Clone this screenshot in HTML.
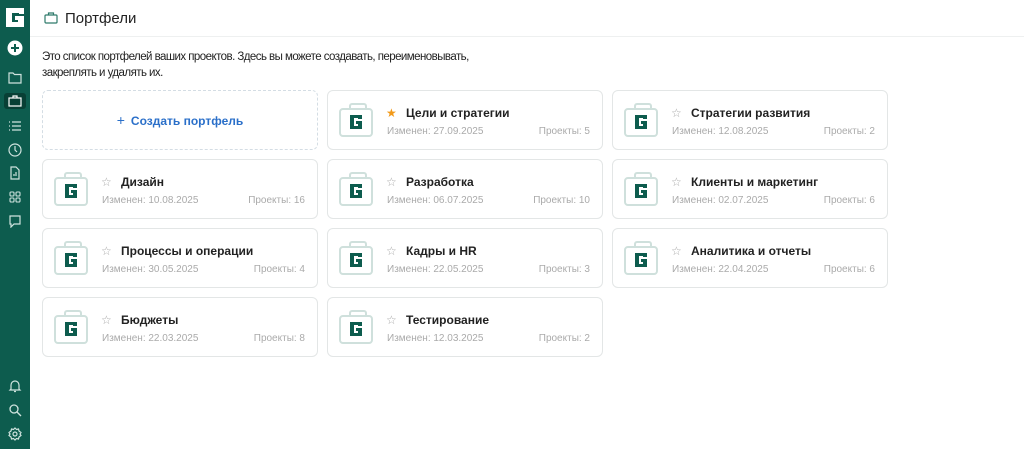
<!DOCTYPE html><html><head><meta charset="utf-8"><style>
*{box-sizing:border-box;margin:0;padding:0}
body{width:1024px;height:449px;overflow:hidden;background:#fff;font-family:"Liberation Sans",sans-serif;position:relative}
.sb{position:absolute;left:0;top:0;width:30px;height:449px;background:#0d5c4e}
.sb svg{position:absolute;left:8px}
.hdr{position:absolute;left:30px;top:0;right:0;height:37px;border-bottom:1px solid #eef0f0}
.hdr span{position:absolute;left:35px;top:10px;font-size:15px;color:#222}
.desc{position:absolute;left:42px;top:49px;font-size:11.5px;letter-spacing:-0.55px;line-height:16px;color:#222;white-space:nowrap}
.card{position:absolute;width:276px;height:60px;border:1px solid #e3e6e6;border-radius:6px;background:#fff}
.card svg.bi{position:absolute;left:11px;top:12px}
.card .st{position:absolute;left:58px;top:15px;font-size:12px;color:#aaa}
.card .t{position:absolute;left:78px;top:15px;font-size:12px;font-weight:bold;color:#222}
.card .d{position:absolute;left:59px;top:35px;font-size:10px;color:#aaa}
.card .p{position:absolute;right:12px;top:35px;font-size:10px;color:#aaa}
.new{position:absolute;left:42px;top:90px;width:276px;height:60px;border:1px dashed #d4dde4;border-radius:6px;color:#2a6fc9;font-size:12px;font-weight:bold;text-align:center;line-height:58px}
</style></head><body>
<div class="sb">
<svg style="left:6px;top:8px" width="18" height="19" viewBox="0 0 18 19"><path d="M0 0h18v6h-5V5H6v9h6v-2H9V8h9v11H0z" fill="#fff"/></svg>
<svg style="left:7px;top:40px" width="16" height="16" viewBox="0 0 16 16"><circle cx="8" cy="8" r="7.5" fill="#fff"/><path d="M8 4v8M4 8h8" stroke="#0d5c4e" stroke-width="2"/></svg>
<svg style="top:72px" width="14" height="12" viewBox="0 0 14 12" fill="none" stroke="#cfe3de" stroke-width="1.2"><path d="M1 1h4l1.5 1.5H13v8.5H1z"/></svg>
<div style="position:absolute;left:4px;top:93px;width:22px;height:16px;background:#083f35;border-radius:3px"></div>
<svg style="top:95px" width="14" height="12" viewBox="0 0 14 12" fill="none" stroke="#fff" stroke-width="1.2"><rect x="1" y="3" width="12" height="8"/><path d="M5 3V1h4v2"/></svg>
<svg style="top:120px" width="14" height="12" viewBox="0 0 14 12" stroke="#cfe3de" stroke-width="1.2"><path d="M1 2h1M4 2h9M1 6h1M4 6h9M1 10h1M4 10h9"/></svg>
<svg style="top:143px" width="14" height="14" viewBox="0 0 14 14" fill="none" stroke="#cfe3de" stroke-width="1.2"><circle cx="7" cy="7" r="6"/><path d="M7 3v4l2 2"/></svg>
<svg style="top:166px" width="14" height="14" viewBox="0 0 14 14" fill="none" stroke="#cfe3de" stroke-width="1.2"><path d="M3 1h5l3 3v9H3z M6 10V8M8 10V6"/></svg>
<svg style="top:191px" width="14" height="12" viewBox="0 0 14 12" fill="none" stroke="#cfe3de" stroke-width="1.1"><rect x="2" y="1" width="4" height="4" rx="1"/><rect x="8" y="1" width="4" height="4" rx="1"/><rect x="2" y="7" width="4" height="4" rx="1"/><rect x="8" y="7" width="4" height="4" rx="1"/></svg>
<svg style="top:215px" width="14" height="13" viewBox="0 0 14 13" fill="none" stroke="#cfe3de" stroke-width="1.2"><path d="M2 1h10v8H6l-3 3V9H2z"/></svg>
<svg style="top:379px" width="14" height="14" viewBox="0 0 14 14" fill="none" stroke="#cfe3de" stroke-width="1.2"><path d="M3 10V6a4 4 0 018 0v4l1 1H2z M6 12.5h2"/></svg>
<svg style="top:403px" width="14" height="14" viewBox="0 0 14 14" fill="none" stroke="#cfe3de" stroke-width="1.3"><circle cx="6" cy="6" r="4"/><path d="M9 9l4 4"/></svg>
<svg style="top:427px" width="14" height="14" viewBox="0 0 14 14" fill="none" stroke="#cfe3de" stroke-width="1.2"><circle cx="7" cy="7" r="2"/><path d="M7 1l1.5 1.5 2-.5.5 2L13 5.5 12 7l1 1.5-2 1.5-.5 2-2-.5L7 13l-1.5-1.5-2 .5-.5-2L1 8.5 2 7 1 5.5l2-1.5.5-2 2 .5z"/></svg>
</div>
<div class="hdr"><svg style="position:absolute;left:14px;top:12px" width="14" height="12" viewBox="0 0 14 12" fill="none" stroke="#2f7a6b" stroke-width="1.2"><rect x="1" y="3" width="12" height="8" rx="1"/><path d="M4.5 3V1h5v2"/></svg><span>Портфели</span></div>
<div class="desc">Это список портфелей ваших проектов. Здесь вы можете создавать, переименовывать,<br>закреплять и удалять их.</div>
<div class="new"><span style="font-weight:normal;font-size:14px;margin-right:6px">+</span>Создать портфель</div>
<svg width="0" height="0" style="position:absolute"><defs><g id="bc"><rect x="11" y="1" width="16" height="8" rx="2" fill="none" stroke="#cfe0dc" stroke-width="2"/><rect x="1" y="6" width="32" height="27" rx="3" fill="#fff" stroke="#cfe0dc" stroke-width="2"/><path d="M11 12h12v4h-4v-1h-4v8h4v-2h-2v-3h6v8H11z" fill="#0d5c4e"/></g></defs></svg>
<div id="cards"></div>
<script>
var d=[[1,0,"Цели и стратегии","27.09.2025",5,1],[2,0,"Стратегии развития","12.08.2025",2],[0,1,"Дизайн","10.08.2025",16],[1,1,"Разработка","06.07.2025",10],[2,1,"Клиенты и маркетинг","02.07.2025",6],[0,2,"Процессы и операции","30.05.2025",4],[1,2,"Кадры и HR","22.05.2025",3],[2,2,"Аналитика и отчеты","22.04.2025",6],[0,3,"Бюджеты","22.03.2025",8],[1,3,"Тестирование","12.03.2025",2]];
var h="";d.forEach(function(c){h+='<div class="card" style="left:'+(42+c[0]*285)+'px;top:'+(90+c[1]*69)+'px"><svg class="bi" width="34" height="34" viewBox="0 0 34 34"><use href="#bc"/></svg><span class="st" style="'+(c[5]?'color:#f29a1a':'')+'">'+(c[5]?'★':'☆')+'</span><span class="t">'+c[2]+'</span><span class="d">Изменен: '+c[3]+'</span><span class="p">Проекты: '+c[4]+'</span></div>'});
document.getElementById("cards").innerHTML=h;
</script>
</body></html>
